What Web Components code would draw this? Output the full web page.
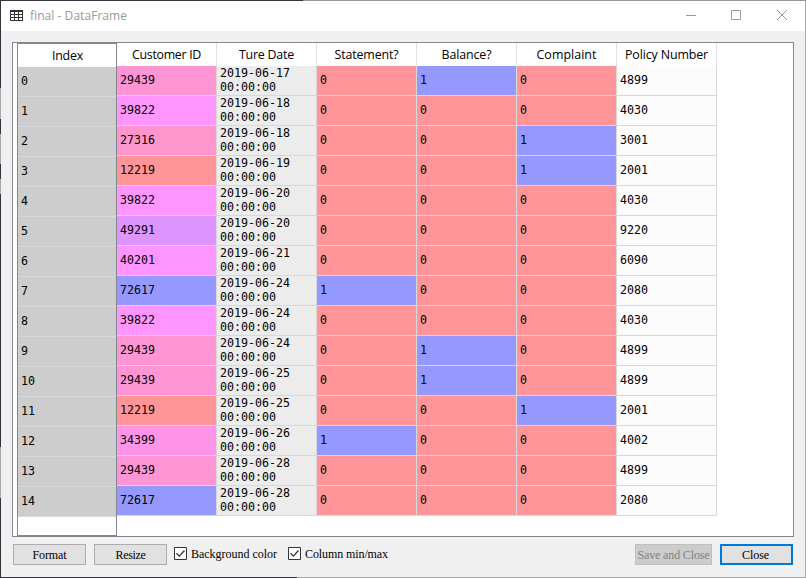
<!DOCTYPE html>
<html lang="en"><head><meta charset="utf-8"><title>final - DataFrame</title>
<style>html,body{margin:0;height:100%;overflow:hidden}</style></head><body>
<data-window></data-window>
<script>
const define=(name,html,setup)=>customElements.define(name,class extends HTMLElement{
  connectedCallback(){ if(this.shadowRoot)return; this.attachShadow({mode:'open'}).innerHTML=html; if(setup)setup(this,this.shadowRoot); }
});
// Text whose tracking is adjusted to occupy a given width.
define('fit-text','<style>:host{display:inline-block;white-space:pre}</style><span></span>',(h,r)=>{
  const s=r.querySelector('span'); s.textContent=h.getAttribute('text');
  const w=+h.getAttribute('w'), n=s.textContent.length;
  const d=(w-s.getBoundingClientRect().width)/n; s.style.letterSpacing=d.toFixed(3)+'px';
});
define('title-bar',`<style>
:host{display:flex;height:30px;background:#fff;align-items:center;font:12px/16px "Open Sans",sans-serif;color:#999;box-sizing:border-box;padding-left:9px}
.i{width:13px;height:11px;margin:0 7px 2px 0;display:block}.t{flex:1}.c{width:138px;height:30px;display:block}</style>
<svg class="i" viewBox="0 0 13 11" shape-rendering="crispEdges"><rect width="13" height="11" rx="1" fill="#333"/><path fill="#fff" d="M1 2h3v2H1zM5 2h3v2H5zM9 2h3v2H9zM1 5h3v2H1zM5 5h3v2H5zM9 5h3v2H9zM1 8h3v2H1zM5 8h3v2H5zM9 8h3v2H9z"/></svg>
<span class="t"><fit-text text="final - DataFrame" w="97"></fit-text></span>
<svg class="c" viewBox="667 1 138 30" fill="none" stroke="#999"><path d="M686 15.5h10M731.5 10.5h9v9h-9zM777 10l10 10M787 10l-10 10"/></svg>`);
define('index-column',`<style>
:host{display:flex;flex-direction:column;box-sizing:border-box;width:100px;height:493px;border:1px solid #828790;background:#fff;font:11.63px/29px "DejaVu Sans Mono",monospace;color:#000}
.h{height:23px;font:12.4px/23px "Open Sans",sans-serif;text-align:center;padding-left:1px}
.r{height:29px;border-bottom:1px solid #d8d8d8;background:#cdcdcd;padding-left:3px}</style><div class="h"><fit-text text="Index" w="31"></fit-text></div>`,(h,r)=>{
  for(let i=0;i<15;i++)r.innerHTML+='<div class="r">'+i+'</div>';
});
define('data-grid',`<style>
:host{display:grid;grid-template-columns:repeat(6,100px);grid-template-rows:23px repeat(15,30px);align-content:start;color:#000;font:11.63px/14px "DejaVu Sans Mono",monospace}
.h{font:12.4px/23px "Open Sans",sans-serif;text-align:center;border-right:1px solid #e2e2e2}
.c{display:flex;align-items:center;box-sizing:border-box;border:solid #d8d8d8;border-width:0 1px 1px 0;padding:0 0 2px 3px;white-space:pre}</style>`,(h,r)=>{
  const heads=[['Customer ID',69],['Ture Date',55],['Statement?',64],['Balance?',50],['Complaint',60],['Policy Number',83]];
  const rows='29439 17 0 1 0 4899|39822 18 0 0 0 4030|27316 18 0 0 1 3001|12219 19 0 0 1 2001|39822 20 0 0 0 4030|49291 20 0 0 0 9220|40201 21 0 0 0 6090|72617 24 1 0 0 2080|39822 24 0 0 0 4030|29439 24 0 1 0 4899|29439 25 0 1 0 4899|12219 25 0 0 1 2001|34399 26 1 0 0 4002|29439 28 0 0 0 4899|72617 28 0 0 0 2080';
  const idColor={29439:'#ff95d5',39822:'#ff95ff',27316:'#ff95cd',12219:'#ff9599',49291:'#de95ff',40201:'#ff95ff',72617:'#9599ff',34399:'#ff95e8'};
  let o=heads.map(([t,w])=>`<div class="h"><fit-text text="${t}" w="${w}"></fit-text></div>`).join('');
  for(const row of rows.split('|'))row.split(' ').forEach((v,i)=>{
    const bg=i==0?idColor[v]:i==1?'#ececec':i==5?'#fcfcfc':v=='1'?'#9599ff':'#ff9599';
    o+=`<div class="c" style="background:${bg}">${i==1?'2019-06-'+v+'\n00:00:00':v}</div>`;
  });
  r.innerHTML+=o;
});
define('push-button',`<style>
:host{display:flex;box-sizing:border-box;height:21px;width:73px;border:1px solid #adadad;background:#e1e1e1;align-items:center;justify-content:center;font:12px/16px "Liberation Serif",serif;color:#000}
:host([off]){width:77px;background:#ccc;border-color:#bfbfbf;color:#838383}
:host([main]){border:2px solid #0078d7}</style><slot></slot>`);
define('check-box',`<style>:host{display:flex;align-items:center;font:12px/16px "Liberation Serif",serif;color:#000}svg{display:block;width:13px;height:13px;margin-right:4px}</style>
<svg viewBox="0 0 13 13" fill="#fff" stroke="#333"><path d="M.5.5h12v12H.5z"/><path d="M2.5 6.2l2.8 2.9 5.2-5.6" fill="none" stroke-width="1.3"/></svg><slot></slot>`);
define('data-window',`<style>
:host{display:block;box-sizing:border-box;width:806px;height:578px;padding:1px;background:
linear-gradient(90deg,#34343f 303px,#9d9494 303px) 0 0/806px 1px no-repeat,
linear-gradient(#34343f 88px,#aaa 88px 119px,#34343f 119px 134px,#aaa 134px 164px,#34343f 164px 179px,#aaa 179px 194px,#34343f 194px 447px,#aaa 447px 498px,#34343f 498px) 0 0/1px 578px no-repeat,
linear-gradient(90deg,#34343f 297px,#a5a5a5 297px) 0 577px/806px 1px no-repeat,#aaa}
.w{background:#f0f0f0;width:804px;height:576px;display:flex;flex-direction:column}
.f{box-sizing:border-box;margin:11px 0 0 11px;width:782px;height:495px;border:1px solid #828790;background:#fff;display:flex;padding-left:4px}
.b{display:flex;align-items:center;padding:7px 12px 0}.g{width:8px}.s{flex:1}</style>
<div class="w"><title-bar></title-bar><div class="f"><index-column></index-column><data-grid></data-grid></div>
<div class="b"><push-button><fit-text text="Format" w="34"></fit-text></push-button><span class="g"></span><push-button><fit-text text="Resize" w="30"></fit-text></push-button><span style="width:7px"></span>
<check-box style="margin-top:-2px"><fit-text text="Background color" w="86"></fit-text></check-box><span style="width:11px"></span><check-box style="margin-top:-2px"><fit-text text="Column min/max" w="83"></fit-text></check-box><span class="s"></span>
<push-button off><fit-text text="Save and Close" w="72"></fit-text></push-button><span class="g"></span><push-button main style="padding-right:2px"><fit-text text="Close" w="27"></fit-text></push-button></div></div>`);
</script></body></html>
